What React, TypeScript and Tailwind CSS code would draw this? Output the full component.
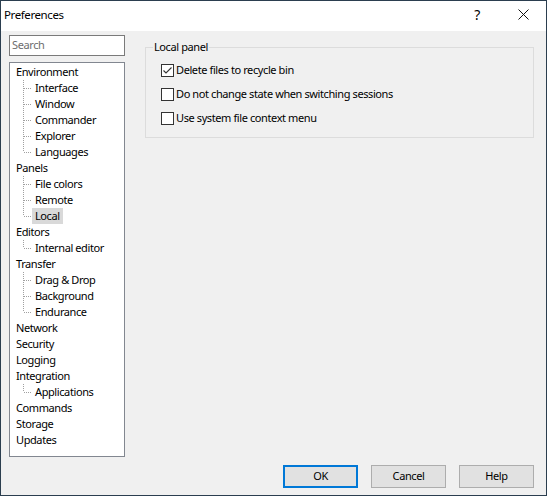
import React from "react";

const font = { fontFamily: '"Noto Sans", "Segoe UI", sans-serif' };

type Node = { label: string; children?: string[] };

const tree: Node[] = [
  { label: "Environment", children: ["Interface", "Window", "Commander", "Explorer", "Languages"] },
  { label: "Panels", children: ["File colors", "Remote", "Local"] },
  { label: "Editors", children: ["Internal editor"] },
  { label: "Transfer", children: ["Drag & Drop", "Background", "Endurance"] },
  { label: "Network" },
  { label: "Security" },
  { label: "Logging" },
  { label: "Integration", children: ["Applications"] },
  { label: "Commands" },
  { label: "Storage" },
  { label: "Updates" },
];

function Connector({ last }: { last: boolean }) {
  return (
    <svg width="9" height="16" className="shrink-0" shapeRendering="crispEdges">
      <line x1="0.5" y1="0" x2="0.5" y2={last ? 8 : 16} stroke="#a0a0a0" strokeDasharray="1 1" />
      <line x1="1" y1="8.5" x2="9" y2="8.5" stroke="#a0a0a0" strokeDasharray="1 1" />
    </svg>
  );
}

function Checkbox({ checked }: { checked?: boolean }) {
  return (
    <span className="flex h-[13px] w-[13px] shrink-0 items-center justify-center border border-[#333333] bg-white">
      {checked && (
        <svg width="11" height="11" viewBox="0 0 11 11">
          <path d="M1.5 5.5 L4 8 L9.5 2.5" fill="none" stroke="#333333" strokeWidth="1.1" />
        </svg>
      )}
    </span>
  );
}

function Button({ label, primary }: { label: string; primary?: boolean }) {
  return (
    <button
      className={
        "flex h-[23px] w-[75px] items-center justify-center bg-[#e1e1e1] text-[11px] text-black " +
        (primary ? "border-2 border-[#0078d7]" : "border border-[#adadad]")
      }
    >
      {label}
    </button>
  );
}

export default function App() {
  return (
    <div
      className="flex h-[496px] w-[547px] flex-col overflow-hidden border border-[#2b3e4f] bg-[#f0f0f0] text-[11px] tracking-[-0.4px] text-black"
      style={font}
    >
      <div className="flex h-[30px] shrink-0 items-center bg-white pb-[3px]">
        <span className="pl-[3px] text-[11.5px]">Preferences</span>
        <div className="ml-auto flex h-full items-center">
          <span className="flex w-[46px] items-center justify-center text-[14px]">?</span>
          <span className="flex w-[46px] items-center justify-center">
            <svg width="11" height="11" viewBox="0 0 11 11">
              <path d="M0.5 0.5 L10.5 10.5 M10.5 0.5 L0.5 10.5" stroke="#111" strokeWidth="1" />
            </svg>
          </span>
        </div>
      </div>
      <div className="flex min-h-0 flex-1 pb-[7px] pl-[8px] pr-[12px] pt-[4px]">
        <div className="flex w-[116px] shrink-0 flex-col gap-[6px] pb-[31px]">
          <div className="flex h-[21px] items-center border border-[#7a7a7a] bg-white pl-[2px] text-[#6d6d6d]">
            Search
          </div>
          <div className="flex-1 border border-[#828790] bg-white pl-[5px] pt-px">
            {tree.map((n) => (
              <div key={n.label}>
                <div className="flex h-4 items-center pl-px">{n.label}</div>
                {n.children?.map((c, i) => (
                  <div key={c} className="flex h-4 items-center pl-[8px]">
                    <Connector last={i === n.children!.length - 1} />
                    <span className={"flex h-4 items-center px-[3px] " + (c === "Local" ? "bg-[#d9d9d9]" : "")}>{c}</span>
                  </div>
                ))}
              </div>
            ))}
          </div>
        </div>
        <div className="ml-[20px] flex flex-1 flex-col">
          <fieldset className="mt-[4px] h-[99px] border border-[#dcdcdc] pl-[15px] pt-[8px]">
            <legend className="-ml-[8px] px-px">Local panel</legend>
            <div className="flex flex-col gap-[11px]">
              <label className="flex h-[13px] items-center gap-[2px]">
                <Checkbox checked />
                <span>Delete files to recycle bin</span>
              </label>
              <label className="flex h-[13px] items-center gap-[2px]">
                <Checkbox />
                <span>Do not change state when switching sessions</span>
              </label>
              <label className="flex h-[13px] items-center gap-[2px]">
                <Checkbox />
                <span>Use system file context menu</span>
              </label>
            </div>
          </fieldset>
          <div className="mt-auto flex justify-end gap-[13px]">
            <Button label="OK" primary />
            <Button label="Cancel" />
            <Button label="Help" />
          </div>
        </div>
      </div>
    </div>
  );
}
